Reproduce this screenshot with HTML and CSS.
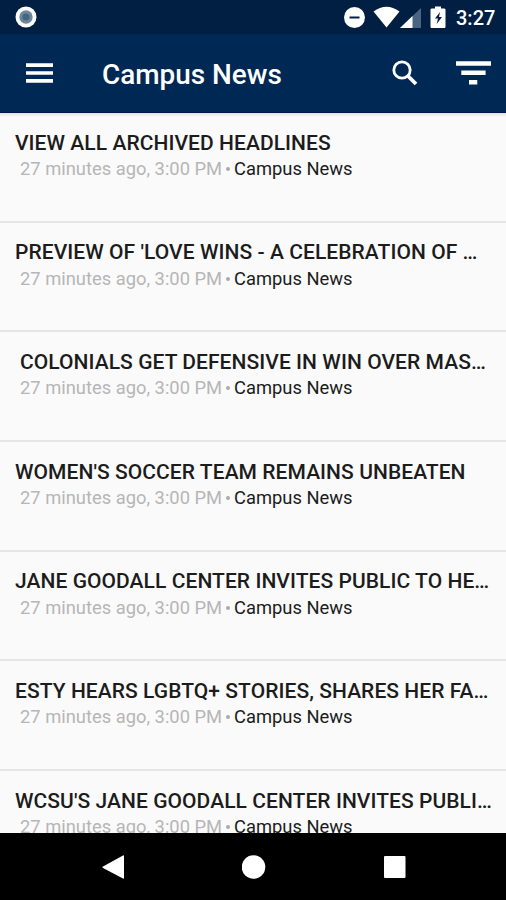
FILE: index.html
```html
<!DOCTYPE html>
<html lang="en">
<head>
<meta charset="utf-8">
<title>Campus News</title>
<link rel="stylesheet" href="styles.css">
</head>
<body>
<div class="screen">
  <div class="status">
    <svg class="dot" viewBox="0 0 22 22"><circle cx="11" cy="11" r="10.5" fill="#fff"/><circle cx="11" cy="11" r="6.7" fill="#6f879c"/><circle cx="11" cy="11" r="3.6" fill="#446580"/></svg>
    <svg class="status-icons" viewBox="0 0 108 24"><circle cx="11.500" cy="12.500" r="10.500" fill="#fff"/><path d="M6.500 12.500h10" stroke="#001f43" stroke-width="2"/><path d="M30.500 6.500Q43.500-3 56.500 6.500L43.500 22.500z" fill="#fff"/><path d="M78 3v20H57z" fill="#4a6583"/><path d="M69.500 11v12H57z" fill="#fff"/><path d="M92 1.500h6v2h3q1.500 0 1.500 1v17q0 1.500-1 1.500h-13q-1 0-1-1.500V4.500q0-1 1.500-1h3z" fill="#fff"/><path d="M97 7l-5 6.500h3l-1.300 5.500 5.300-7h-3z" fill="#001f43"/></svg>
    <span class="clock">3:27</span>
  </div>
  <header class="bar">
    <svg class="menu" viewBox="0 0 27 20"><path d="M0 2.200h27M0 10h27M0 17.800h27" stroke="#fff" stroke-width="3.700"/></svg>
    <h1>Campus News</h1>
    <svg class="search" viewBox="0 0 26 26"><circle cx="10" cy="10" r="8.200" fill="none" stroke="#fff" stroke-width="2.800"/><path d="M15.500 15.500l8.500 8.500" stroke="#fff" stroke-width="3.700"/></svg>
    <svg class="filter" viewBox="0 0 35 24"><path d="M0 2.500h35M5.300 11.800h24.300M13 21.200h8.300" stroke="#fff" stroke-width="4.600"/></svg>
  </header>
  <main class="list">
    <article><h2>VIEW ALL ARCHIVED HEADLINES</h2><p><span class="time">27 minutes ago, 3:00 PM</span><i></i><span class="source">Campus News</span></p></article>
    <article><h2>PREVIEW OF 'LOVE WINS - A CELEBRATION OF …</h2><p><span class="time">27 minutes ago, 3:00 PM</span><i></i><span class="source">Campus News</span></p></article>
    <article><h2 class="inset">COLONIALS GET DEFENSIVE IN WIN OVER MAS…</h2><p><span class="time">27 minutes ago, 3:00 PM</span><i></i><span class="source">Campus News</span></p></article>
    <article><h2>WOMEN'S SOCCER TEAM REMAINS UNBEATEN</h2><p><span class="time">27 minutes ago, 3:00 PM</span><i></i><span class="source">Campus News</span></p></article>
    <article><h2>JANE GOODALL CENTER INVITES PUBLIC TO HE…</h2><p><span class="time">27 minutes ago, 3:00 PM</span><i></i><span class="source">Campus News</span></p></article>
    <article><h2>ESTY HEARS LGBTQ+ STORIES, SHARES HER FA…</h2><p><span class="time">27 minutes ago, 3:00 PM</span><i></i><span class="source">Campus News</span></p></article>
    <article><h2>WCSU'S JANE GOODALL CENTER INVITES PUBLI…</h2><p><span class="time">27 minutes ago, 3:00 PM</span><i></i><span class="source">Campus News</span></p></article>
  </main>
  <nav class="nav">
    <svg viewBox="0 0 24 24"><path d="M22 1v22q0 1-1 .5L1 13q-1.200-.8 0-1.500L21 .5q1-.5 1 .5z" fill="#fff"/></svg>
    <svg viewBox="0 0 24 24"><circle cx="11.500" cy="12" r="11.800" fill="#fff"/></svg>
    <svg viewBox="0 0 24 24"><rect x="1" y="1" width="21.500" height="22" rx="1" fill="#fff"/></svg>
  </nav>
</div>
</body>
</html>
```
FILE: styles.css
```css
* { box-sizing: border-box; }
body { margin: 0; font-family: Roboto, "Liberation Sans", sans-serif; }
.screen { width: 506px; height: 900px; display: flex; flex-direction: column; overflow: hidden; background: #fafafa; }
.status { height: 34px; flex: none; display: flex; align-items: flex-start; background: #001f43; color: #fff; padding-left: 15px; }
.dot { width: 22px; height: 22px; margin-top: 6px; }
.status-icons { width: 108px; height: 24px; margin: 5px 0 0 306px; }
.clock { margin: 6px 0 0 5px; font-size: 20px; line-height: 24px; font-weight: 500; }
.bar { height: 79px; flex: none; display: flex; align-items: flex-start; background: #002855; border-bottom: 1px solid #001848; color: #fff; padding-left: 26px; }
.menu { width: 27px; height: 20px; margin-top: 29px; }
h1 { width: 181px; margin: 25px 0 0 49px; font-size: 27.9px; line-height: 32px; font-weight: 500; white-space: nowrap; }
.search { width: 26px; height: 26px; margin: 26px 0 0 109px; }
.filter { width: 35px; height: 24px; margin: 27px 0 0 38px; }
.list { flex: 1; min-height: 0; overflow: hidden; background: linear-gradient(#e2e2e2, #fafafa 4px); }
article { height: 109.7px; padding: 16.500px 0 0 15px; border-bottom: 2px solid #e5e5e5; white-space: nowrap; }
h2 { margin: 0; font-size: 21px; line-height: 26px; font-weight: 500; letter-spacing: 0.06px; color: #1c1c1c; }
.inset { padding-left: 5px; }
p { display: flex; align-items: center; margin: 0.500px 0 0 5px; font-size: 18.35px; line-height: 26px; }
.time { width: 203px; color: #b6b6b6; }
i { width: 4px; height: 4px; margin: 0 4px 0 3px; border-radius: 50%; background: #aaa; }
.source { color: #1c1c1c; }
.nav { height: 67px; flex: none; display: flex; align-items: flex-start; gap: 116.500px; padding: 21.500px 0 0 101.700px; background: #000; }
.nav svg { width: 24px; height: 24px; }
```
